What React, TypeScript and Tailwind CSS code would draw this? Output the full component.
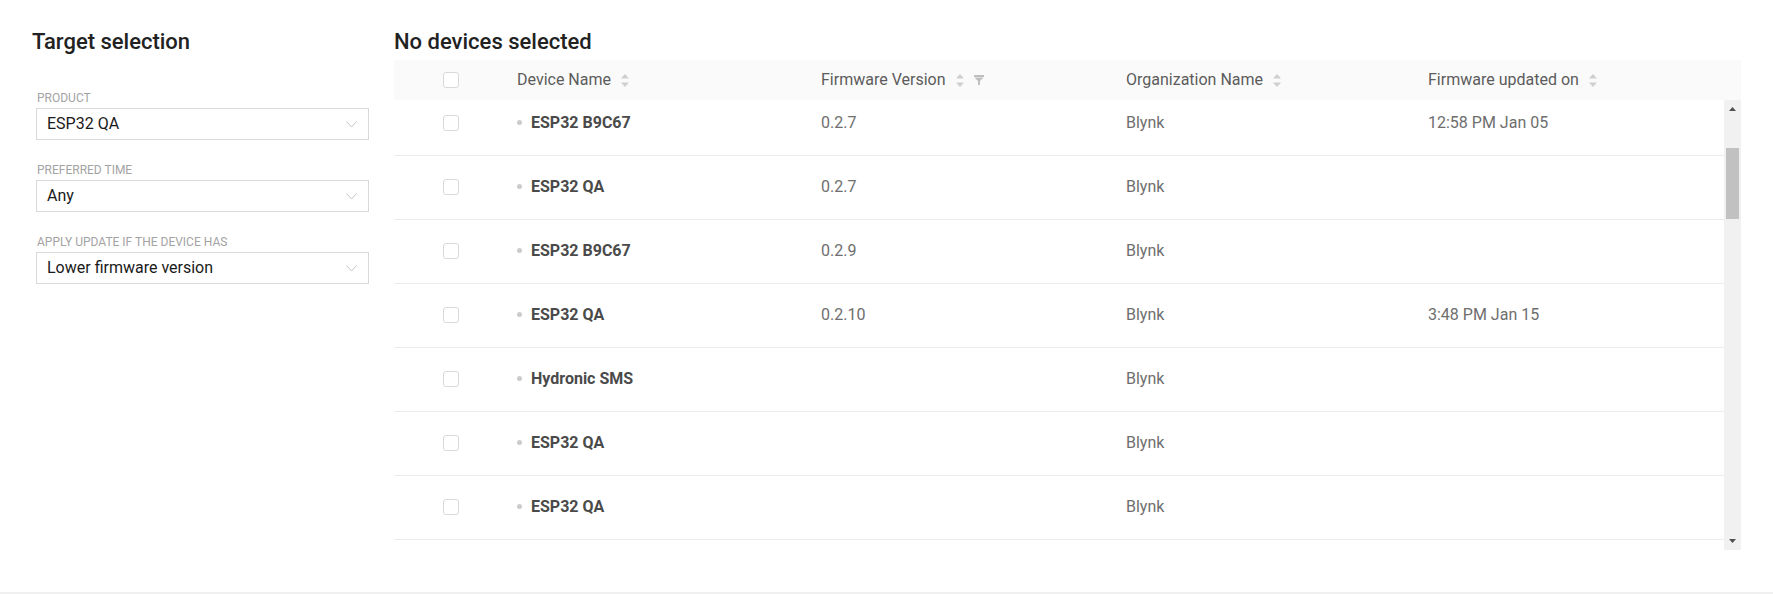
import React from "react";

const rows = [
  { name: "ESP32 B9C67", fw: "0.2.7", org: "Blynk", date: "12:58 PM Jan 05" },
  { name: "ESP32 QA", fw: "0.2.7", org: "Blynk", date: "" },
  { name: "ESP32 B9C67", fw: "0.2.9", org: "Blynk", date: "" },
  { name: "ESP32 QA", fw: "0.2.10", org: "Blynk", date: "3:48 PM Jan 15" },
  { name: "Hydronic SMS", fw: "", org: "Blynk", date: "" },
  { name: "ESP32 QA", fw: "", org: "Blynk", date: "" },
  { name: "ESP32 QA", fw: "", org: "Blynk", date: "" },
];

function Chevron() {
  return (
    <svg width="11" height="7" viewBox="0 0 11 7" fill="none">
      <polyline points="0.5,0.5 5.5,6 10.5,0.5" stroke="#c4c4c4" strokeWidth="1" />
    </svg>
  );
}

function SortIcon() {
  return (
    <svg width="8" height="13" viewBox="0 0 8 13">
      <polygon points="0,4.5 4,0 8,4.5" fill="#cfcfcf" />
      <polygon points="0,8.5 8,8.5 4,13" fill="#cfcfcf" />
    </svg>
  );
}

function FilterIcon() {
  return (
    <svg width="10" height="10" viewBox="0 0 10 10">
      <path d="M0 0H10V2H0Z M0.5 2.5H9.5L6 6V10H4V6Z" fill="#bfbfbf" />
    </svg>
  );
}

function Checkbox() {
  return <div className="w-4 h-4 rounded-[3px] border border-[#d9d9d9] bg-white" />;
}

function Field({ label, value }: { label: string; value: string }) {
  return (
    <div className="flex flex-col">
      <div className="text-[12px] leading-[14px] text-[#a3a3a3] pl-px">{label}</div>
      <div className="mt-[3px] h-8 border border-[#d9d9d9] bg-white flex items-center justify-between pl-[10px] pr-[11px]">
        <span className="text-[16px] text-[#1a1a1a]">{value}</span>
        <Chevron />
      </div>
    </div>
  );
}

function HeaderCell({ label, filter }: { label: string; filter?: boolean }) {
  return (
    <div className="flex items-center pl-4">
      <span className="text-[16px] text-[#5c5c5c]">{label}</span>
      <span className="ml-[10px] flex"><SortIcon /></span>
      {filter && <span className="ml-[10px] flex"><FilterIcon /></span>}
    </div>
  );
}

export default function App() {
  return (
    <div className="w-[1773px] h-[594px] bg-white flex flex-col overflow-hidden" style={{ fontFamily: "Roboto, 'Liberation Sans', sans-serif" }}>
      <div className="flex-1 flex pt-[29px] pl-[32px] pr-[32px]">
        {/* Left panel */}
        <div className="w-[337px] shrink-0 flex flex-col">
          <h2 className="text-[22px] leading-[26px] font-medium text-[#222]">Target selection</h2>
          <div className="mt-[36px] pl-[4px] flex flex-col gap-[23px]">
            <Field label="PRODUCT" value="ESP32 QA" />
            <Field label="PREFERRED TIME" value="Any" />
            <Field label="APPLY UPDATE IF THE DEVICE HAS" value="Lower firmware version" />
          </div>
        </div>

        {/* Right panel */}
        <div className="ml-[25px] flex-1 flex flex-col">
          <h2 className="text-[22px] leading-[26px] font-medium text-[#222] mb-[5px]">No devices selected</h2>
          <div className="h-10 bg-[#fafafa] grid grid-cols-[107px_304px_305px_302px_1fr] items-center">
            <div className="pl-[49px] flex"><Checkbox /></div>
            <HeaderCell label="Device Name" />
            <HeaderCell label="Firmware Version" filter />
            <HeaderCell label="Organization Name" />
            <HeaderCell label="Firmware updated on" />
          </div>
          <div className="h-[450px] flex">
            <div className="flex-1 overflow-hidden">
              <div className="-mt-2">
                {rows.map((r, i) => (
                  <div key={i} className="h-16 pb-[2px] border-b border-[#ebebeb] grid grid-cols-[107px_304px_305px_302px_1fr] items-center">
                    <div className="pl-[49px] flex"><Checkbox /></div>
                    <div className="pl-4 flex items-center gap-[9px]">
                      <span className="w-[5px] h-[5px] rounded-full bg-[#cccccc]" />
                      <span className="text-[16px] font-bold text-[#4a4a4a]">{r.name}</span>
                    </div>
                    <div className="pl-4 text-[16px] text-[#6e6e6e]">{r.fw}</div>
                    <div className="pl-4 text-[16px] text-[#6e6e6e]">{r.org}</div>
                    <div className="pl-4 text-[16px] text-[#6e6e6e]">{r.date}</div>
                  </div>
                ))}
              </div>
            </div>
            {/* Scrollbar */}
            <div className="w-[17px] bg-[#f1f1f1] flex flex-col items-center">
              <svg className="mt-[7px]" width="7" height="4" viewBox="0 0 7 4">
                <polygon points="0,4 3.5,0 7,4" fill="#505050" />
              </svg>
              <div className="mt-[37px] w-[13px] h-[71px] bg-[#c1c1c1]" />
              <div className="flex-1" />
              <svg className="mb-[7px]" width="7" height="4" viewBox="0 0 7 4">
                <polygon points="0,0 7,0 3.5,4" fill="#505050" />
              </svg>
            </div>
          </div>
        </div>
      </div>
      <div className="h-[2px] bg-[#f0f0f0]" />
    </div>
  );
}
